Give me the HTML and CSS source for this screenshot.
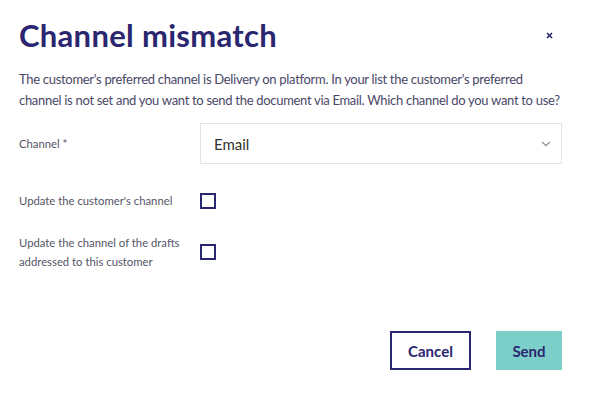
FILE: index.html
```html
<!DOCTYPE html>
<html>
<head>
    <title>Channel mismatch</title>
    <link rel="stylesheet" href="styles.css">
</head>
<body>
    <div class="dialog">
        <div class="header">
            <h1>Channel mismatch</h1>
            <button class="close" aria-label="Close">
                <svg width="7" height="7" viewBox="0 0 7 7"><path d="M1 1 L6 6 M6 1 L1 6" stroke="#2b2670" stroke-width="1.6"/></svg>
            </button>
        </div>
        <p class="intro">The customer's preferred channel is Delivery on platform. In your list the customer's preferred<br>channel is not set and you want to send the document via Email. Which channel do you want to use?</p>

        <div class="form">
            <div class="row">
                <label class="label">Channel *</label>
                <div class="select">
                    <span>Email</span>
                    <svg width="10" height="6" viewBox="0 0 10 6"><path d="M1 1 L5 4.5 L9 1" fill="none" stroke="#999" stroke-width="1.4"/></svg>
                </div>
            </div>
            <div class="row check-row first">
                <label class="label">Update the customer's channel</label>
                <span class="checkbox"></span>
            </div>
            <div class="row check-row">
                <label class="label">Update the channel of the drafts<br>addressed to this customer</label>
                <span class="checkbox"></span>
            </div>
        </div>

        <div class="actions">
            <button class="btn btn-outline">Cancel</button>
            <button class="btn btn-primary">Send</button>
        </div>
    </div>
</body>
</html>
```

FILE: styles.css
```css
body {
    margin: 0;
    background: white;
    font-family: Lato, "Open Sans", sans-serif;
    color: #4a4867;
}
.dialog {
    width: 543px;
    padding: 17px 29px 0 19px;
}
.header {
    display: flex;
    justify-content: space-between;
    align-items: center;
}
h1 {
    margin: 0;
    font-size: 31px;
    font-weight: bold;
    color: #2b2670;
    line-height: 36px;
    letter-spacing: 0.3px;
}
.close {
    border: none;
    background: none;
    padding: 0;
    margin-right: 9px;
    width: 7px;
    height: 7px;
    display: flex;
}
.intro {
    margin: 16px 0 0;
    font-size: 13px;
    line-height: 21px;
    letter-spacing: -0.3px;
    white-space: nowrap;
    color: #4a4867;
}
.form {
    margin-top: 12px;
}
.row {
    display: grid;
    grid-template-columns: 181px 362px;
    align-items: center;
}
.label {
    font-size: 11.3px;
    line-height: 19px;
    color: #555468;
}
.select {
    height: 39px;
    border: 1px solid #e3e3e3;
    display: flex;
    align-items: center;
    justify-content: space-between;
    padding: 0 10px 0 13px;
    font-size: 15px;
    color: #333;
}
.check-row {
    margin-top: 23px;
}
.check-row.first {
    margin-top: 27px;
}
.checkbox {
    width: 12px;
    height: 12px;
    border: 2px solid #2b2670;
}
.actions {
    display: flex;
    justify-content: flex-end;
    gap: 25px;
    margin-top: 60px;
}
.btn {
    height: 39px;
    font-family: Lato, sans-serif;
    font-size: 15px;
    font-weight: bold;
    color: #2b2670;
    padding: 0;
}
.btn-outline {
    width: 81px;
    background: white;
    border: 2px solid #2b2670;
}
.btn-primary {
    width: 66px;
    background: #7ccfc8;
    border: none;
}
```
